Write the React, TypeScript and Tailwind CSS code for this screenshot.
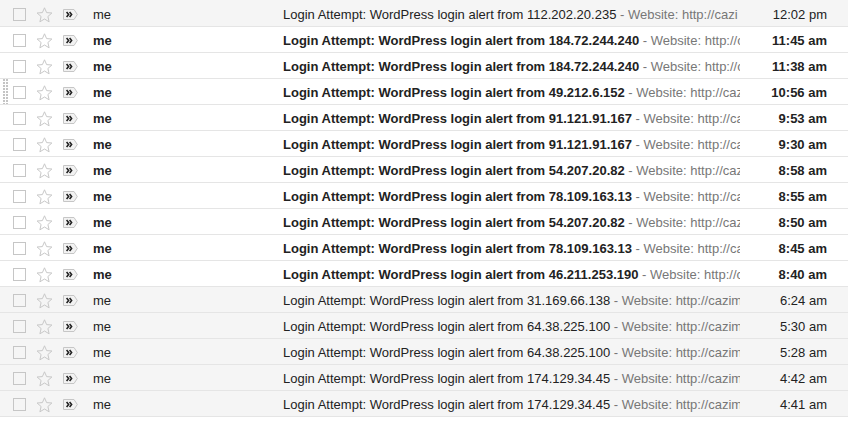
import React from "react";

type Row = { ip: string; time: string; unread: boolean; url: string; handle?: boolean };

const rows: Row[] = [
  { ip: "112.202.20.235", time: "12:02 pm", unread: false, url: "http://cazi" },
  { ip: "184.72.244.240", time: "11:45 am", unread: true, url: "http://cazimi" },
  { ip: "184.72.244.240", time: "11:38 am", unread: true, url: "http://cazimi" },
  { ip: "49.212.6.152", time: "10:56 am", unread: true, url: "http://cazimi", handle: true },
  { ip: "91.121.91.167", time: "9:53 am", unread: true, url: "http://cazimi" },
  { ip: "91.121.91.167", time: "9:30 am", unread: true, url: "http://cazimi" },
  { ip: "54.207.20.82", time: "8:58 am", unread: true, url: "http://cazimi" },
  { ip: "78.109.163.13", time: "8:55 am", unread: true, url: "http://cazimi" },
  { ip: "54.207.20.82", time: "8:50 am", unread: true, url: "http://cazimi" },
  { ip: "78.109.163.13", time: "8:45 am", unread: true, url: "http://cazimi" },
  { ip: "46.211.253.190", time: "8:40 am", unread: true, url: "http://cazimi" },
  { ip: "31.169.66.138", time: "6:24 am", unread: false, url: "http://cazimi" },
  { ip: "64.38.225.100", time: "5:30 am", unread: false, url: "http://cazimi" },
  { ip: "64.38.225.100", time: "5:28 am", unread: false, url: "http://cazimi" },
  { ip: "174.129.34.45", time: "4:42 am", unread: false, url: "http://cazimi" },
  { ip: "174.129.34.45", time: "4:41 am", unread: false, url: "http://cazimi" },
];

function Star() {
  return (
    <svg width="17" height="16" viewBox="0 0 17 16" className="block">
      <polygon
        points="8.5,0.8 10.6,5.6 15.9,6 11.9,9.5 13.1,14.8 8.5,12 3.9,14.8 5.1,9.5 1.1,6 6.4,5.6"
        fill="none"
        stroke="#c8c8c8"
        strokeWidth="1"
        strokeLinejoin="round"
      />
    </svg>
  );
}

function Important() {
  return (
    <svg width="15" height="11" viewBox="0 0 15 11" className="block">
      <path d="M0.5 0.5 H11 L14.3 5.5 L11 10.5 H0.5 Z" fill="#f2f2f2" stroke="#c6c6c6" strokeWidth="1" />
      <polyline points="3.6,3 5.6,5.5 3.6,8" fill="none" stroke="#222" strokeWidth="1.6" />
      <polyline points="6.6,3 8.6,5.5 6.6,8" fill="none" stroke="#222" strokeWidth="1.6" />
    </svg>
  );
}

function Handle() {
  return (
    <svg width="7" height="25" viewBox="0 0 7 25" className="block">
      <defs>
        <pattern id="dots" width="3" height="3" patternUnits="userSpaceOnUse">
          <rect x="0" y="0" width="2" height="2" fill="#c4c4c4" />
        </pattern>
      </defs>
      <rect x="0" y="0" width="6" height="25" fill="url(#dots)" />
    </svg>
  );
}

export default function App() {
  return (
    <div className="w-[857px] h-[421px] bg-white font-['Liberation_Sans',Arial,sans-serif] text-[13px] text-[#222]">
      <div className="w-[848px] border-t border-[#f5f5f5]">
        {rows.map((r, i) => (
          <div
            key={i}
            className={`flex items-center h-[26px] pt-[2px] border-b border-[#e5e5e5] ${r.unread ? "bg-white" : "bg-[#f5f5f5]"}`}
          >
            <div className="w-[13px] self-stretch flex items-center pl-[3px] -mt-[2px]">{r.handle ? <Handle /> : null}</div>
            <div className="w-[13px] h-[13px] border border-[#c6c6c6] bg-transparent" />
            <div className="ml-[10px]">
              <Star />
            </div>
            <div className="ml-[10px]">
              <Important />
            </div>
            <div className={`ml-[15px] w-[190px] ${r.unread ? "font-bold" : ""}`}>me</div>
            <div className="w-[457px] overflow-hidden whitespace-nowrap">
              <span className={r.unread ? "font-bold" : ""}>
                Login Attempt: WordPress login alert from {r.ip}
              </span>
              <span className="text-[#777]"> - Website: {r.url}</span>
            </div>
            <div className={`flex-1 text-right pr-[21px] ${r.unread ? "font-bold" : ""}`}>{r.time}</div>
          </div>
        ))}
      </div>
    </div>
  );
}
